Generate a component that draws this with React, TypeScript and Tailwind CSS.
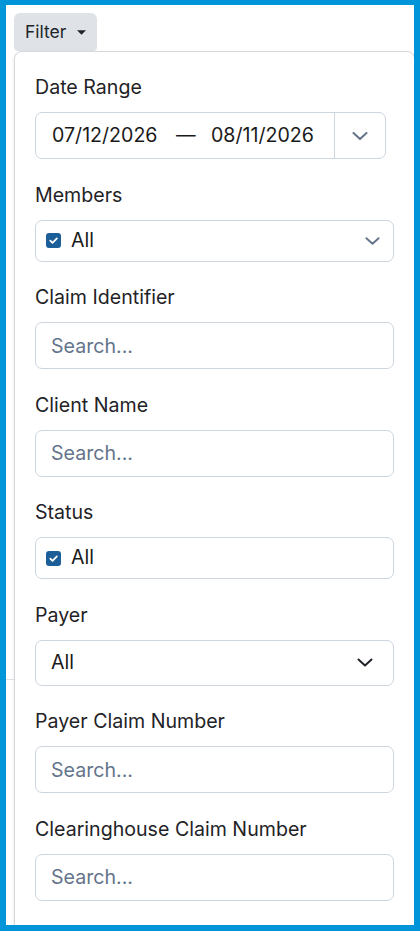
import React from 'react';

function Chevron({ className }: { className: string }) {
  return (
    <svg viewBox="0 0 16 8" fill="none" className={className}>
      <path d="M1.5 1l6.5 6 6.5-6" stroke="currentColor" strokeWidth="2" strokeLinecap="round" strokeLinejoin="round" />
    </svg>
  );
}

function CheckBox() {
  return (
    <span className="flex h-[15px] w-[15px] items-center justify-center rounded-[3px] bg-[#1b5e98]">
      <svg viewBox="0 0 12 12" fill="none" className="h-[11px] w-[11px]">
        <path d="M2.5 6.2l2.4 2.4 4.8-5" stroke="white" strokeWidth="1.9" strokeLinecap="round" strokeLinejoin="round" />
      </svg>
    </span>
  );
}

function Label({ children }: { children: React.ReactNode }) {
  return <div className="mb-[11px] text-[19.6px] leading-[28px] text-[#1f2327]">{children}</div>;
}

function SearchInput() {
  return (
    <input
      type="text"
      placeholder="Search..."
      className="h-[47px] w-full rounded-[7px] border border-[#cdd5df] bg-white px-[15px] text-[19.6px] text-[#212529] outline-none placeholder:text-[#64748b]"
    />
  );
}

export default function App() {
  return (
    <div className="relative h-[931px] w-[420px] overflow-hidden border-x-[6px] border-t-[5px] border-b-[6px] border-[#0094d9] bg-white font-['Inter',sans-serif]">
      <div className="relative ml-[8px] mt-[8px] w-fit">
        <button className="flex h-[38px] items-center gap-[11px] rounded-t-md rounded-b-sm bg-[#dfe3e8] pl-[11px] pr-[11px] text-[17.5px] text-[#212529]">
          Filter
          <svg viewBox="0 0 10 5" className="h-[5px] w-[9px]">
            <path d="M0 0h10L5 5z" fill="#212529" />
          </svg>
        </button>

        {/* dropdown panel */}
        <div className="absolute left-0 top-full z-10 h-[900px] w-[401px] rounded-lg border border-[#d5d9de] bg-white px-5 pt-[21px] shadow-sm">
          <div className="flex flex-col gap-[21.5px]">
            <div>
              <Label>Date Range</Label>
              <div className="flex h-[47px] w-[351px] items-center rounded-[7px] border border-[#cdd5df] text-[19.6px] text-[#1a1a1a]">
                <span className="w-[140px] pl-4">07/12/2026</span>
                <span className="w-[35px]">—</span>
                <span>08/11/2026</span>
                <span className="flex-1" />
                <span className="flex h-full w-[51px] items-center justify-center border-l border-[#cdd5df] text-[#64748b]">
                  <Chevron className="h-[8px] w-[16px]" />
                </span>
              </div>
            </div>

            <div>
              <Label>Members</Label>
              <div className="flex h-[42px] items-center rounded-[7px] border border-[#cdd5df] pl-[10px] pr-[13px]">
                <CheckBox />
                <span className="ml-[10px] text-[19.6px] text-[#1a1a1a]">All</span>
                <span className="flex-1" />
                <Chevron className="h-[8px] w-[15px] text-[#64748b]" />
              </div>
            </div>

            <div>
              <Label>Claim Identifier</Label>
              <SearchInput />
            </div>

            <div>
              <Label>Client Name</Label>
              <SearchInput />
            </div>

            <div>
              <Label>Status</Label>
              <div className="flex h-[42px] items-center rounded-[7px] border border-[#cdd5df] pl-[10px]">
                <CheckBox />
                <span className="ml-[10px] text-[19.6px] text-[#1a1a1a]">All</span>
              </div>
            </div>

            <div>
              <Label>Payer</Label>
              <div className="flex h-[46px] items-center rounded-[7px] border border-[#cdd5df] pl-[15px] pr-[20px]">
                <span className="text-[19.6px] text-[#1a1a1a]">All</span>
                <span className="flex-1" />
                <Chevron className="h-[9px] w-[16px] text-[#1f2328]" />
              </div>
            </div>

            <div>
              <Label>Payer Claim Number</Label>
              <SearchInput />
            </div>

            <div>
              <Label>Clearinghouse Claim Number</Label>
              <SearchInput />
            </div>
          </div>
        </div>
      </div>

      {/* page content hidden behind the dropdown */}
      <div className="mt-[628px] border-t border-[#dee2e6]" />
    </div>
  );
}
